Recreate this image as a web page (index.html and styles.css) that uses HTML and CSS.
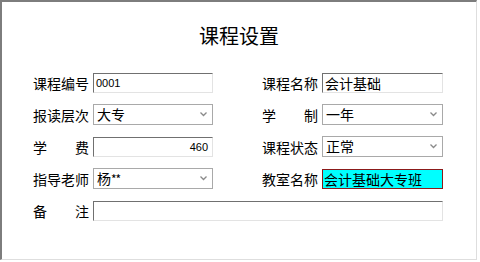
FILE: index.html
```html
<!DOCTYPE html>
<html lang="zh">
<head>
<meta charset="utf-8">
<link rel="stylesheet" href="styles.css">
</head>
<body>
<div class="frame">
  <h1 class="title">课程设置</h1>
  <div class="form">
    <div class="field">
      <span class="label">课程编号</span>
      <div class="input num">0001</div>
    </div>
    <div class="field">
      <span class="label">课程名称</span>
      <div class="input">会计基础</div>
    </div>

    <div class="field">
      <span class="label">报读层次</span>
      <div class="select"><span>大专</span><svg class="chev" width="7" height="5" viewBox="0 0 7 5"><polyline points="0.5,0.5 3.5,3.5 6.5,0.5" fill="none" stroke="#8a8a8a" stroke-width="1.3"/></svg></div>
    </div>
    <div class="field">
      <span class="label">学制</span>
      <div class="select"><span>一年</span><svg class="chev" width="7" height="5" viewBox="0 0 7 5"><polyline points="0.5,0.5 3.5,3.5 6.5,0.5" fill="none" stroke="#8a8a8a" stroke-width="1.3"/></svg></div>
    </div>

    <div class="field">
      <span class="label">学费</span>
      <div class="input num right">460</div>
    </div>
    <div class="field">
      <span class="label">课程状态</span>
      <div class="select"><span>正常</span><svg class="chev" width="7" height="5" viewBox="0 0 7 5"><polyline points="0.5,0.5 3.5,3.5 6.5,0.5" fill="none" stroke="#8a8a8a" stroke-width="1.3"/></svg></div>
    </div>

    <div class="field">
      <span class="label">指导老师</span>
      <div class="select"><span>杨<span class="star">**</span></span><svg class="chev" width="7" height="5" viewBox="0 0 7 5"><polyline points="0.5,0.5 3.5,3.5 6.5,0.5" fill="none" stroke="#8a8a8a" stroke-width="1.3"/></svg></div>
    </div>
    <div class="field">
      <span class="label">教室名称</span>
      <div class="input focus">会计基础大专班</div>
    </div>

    <div class="field wide">
      <span class="label">备注</span>
      <div class="input"></div>
    </div>
  </div>
</div>
</body>
</html>
```
FILE: styles.css
```css
* { box-sizing: border-box; }
html, body { margin: 0; padding: 0; background: #fff; }
body {
  font-family: "Noto Sans CJK SC", "Liberation Sans", sans-serif;
  color: #000;
}
.frame {
  width: 477px;
  height: 260px;
  border-top: 2px solid #7d7d7d;
  border-left: 2px solid #7d7d7d;
  border-right: 1px solid #dedede;
  border-bottom: 1px solid #dedede;
  background: #fff;
}
.title {
  margin: 0;
  padding-top: 21px;
  height: 70px;
  text-align: center;
  font-size: 20px;
  font-weight: normal;
  line-height: 26px;
}
.form {
  padding-left: 31px;
  display: grid;
  grid-template-columns: 180px 181px;
  column-gap: 49px;
  grid-auto-rows: 32px;
  align-items: start;
}
.field {
  display: flex;
  align-items: center;
  gap: 4px;
  height: 21px;
}
.field.wide { grid-column: 1 / 3; }
.label {
  width: 56px;
  font-size: 14px;
  line-height: 20px;
  text-align: justify;
  text-align-last: justify;
  white-space: nowrap;
}
.input {
  flex: 1;
  height: 20px;
  border-top: 1px solid #707070;
  border-left: 1px solid #707070;
  border-right: 1px solid #e3e3e3;
  border-bottom: 1px solid #e3e3e3;
  font-size: 14px;
  line-height: 18px;
  padding: 0 2px;
  white-space: nowrap;
  overflow: hidden;
}
.input.num {
  font-family: "Liberation Sans", sans-serif;
  font-size: 11px;
  line-height: 18px;
}
.input.right { text-align: right; padding-right: 4px; }
.input.focus {
  background: #00ffff;
  border: 1px solid #8b1a1a;
  padding: 0 1px;
}
.select {
  flex: 1;
  height: 21px;
  border: 1px solid #a9a9a9;
  display: flex;
  align-items: center;
  justify-content: space-between;
  padding: 0 5px 0 3px;
  font-size: 14px;
  line-height: 19px;
}
.star { font-size: 12px; letter-spacing: -1px; }
.chev { display: block; }
```
